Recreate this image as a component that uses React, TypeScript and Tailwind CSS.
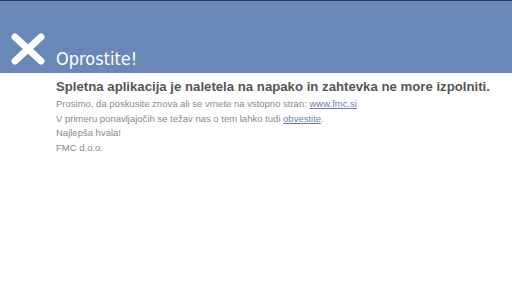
import React from 'react';

function CloseMark() {
  return (
    <svg width="36" height="32" viewBox="0 0 36 32" className="shrink-0 mb-[8px]">
      <path d="M5 4 L31 28 M31 4 L5 28" stroke="#ffffff" strokeWidth="7" strokeLinecap="round" fill="none" />
    </svg>
  );
}

export default function App() {
  return (
    <div className="w-[512px] h-[288px] bg-white overflow-hidden font-['Liberation_Sans',Arial,sans-serif]">
      <div className="h-[73px] bg-[#6987b7] border-t border-[#2a3550] flex items-end pl-[10px]">
        <CloseMark />
        <span className="ml-[10px] pb-[5px] text-[18px] leading-none text-white font-['DejaVu_Sans_Condensed',sans-serif]">
          Oprostite!
        </span>
      </div>
      <div className="pl-[56px] pt-[6px]">
        <h1 className="text-[13.2px] leading-[16px] font-bold text-[#555555]">
          Spletna aplikacija je naletela na napako in zahtevka ne more izpolniti.
        </h1>
        <div className="mt-[2px] text-[9.5px] leading-[14.5px] text-[#8a8a8a]">
          <p>
            Prosimo, da poskusite znova ali se vrnete na vstopno stran:{' '}
            <a href="#" className="text-[#6a7fa8] underline">www.fmc.si</a>
          </p>
          <p>
            V primeru ponavljajočih se težav nas o tem lahko tudi{' '}
            <a href="#" className="text-[#6a7fa8] underline">obvestite</a>.
          </p>
          <p>Najlepša hvala!</p>
          <p>FMC d.o.o.</p>
        </div>
      </div>
    </div>
  );
}
